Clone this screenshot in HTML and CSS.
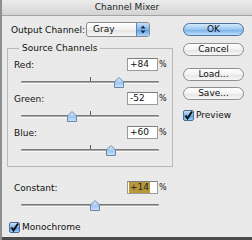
FILE: index.html
```html
<!DOCTYPE html>
<html>
<head>
<meta charset="utf-8">
<link rel="stylesheet" href="styles.css">
</head>
<body>
<div class="win">
  <div class="titlebar">Channel Mixer</div>
  <div class="body">
    <div class="left">
      <div class="outrow">
        <span class="outlabel">Output Channel:</span>
        <div class="popup">
          <span class="popup-text">Gray</span>
          <span class="arrows">
            <svg width="12" height="13" viewBox="0 0 12 13"><path d="M6 2.5 L8.5 5.5 L3.5 5.5 Z M6 10.5 L8.5 7.5 L3.5 7.5 Z" fill="#1b2846"/></svg>
          </span>
        </div>
      </div>
      <fieldset class="group">
        <legend>Source Channels</legend>
        <div class="chan">
          <div class="head"><span class="lbl">Red:</span><span class="field">+84</span><span class="pct">%</span></div>
          <div class="slider"><div class="track"></div><div class="tick"></div><div class="thumb" style="left:71%"><svg width="10" height="11" viewBox="0 0 10 11"><defs><linearGradient id="g1" x1="0" y1="0" x2="0" y2="1"><stop offset="0" stop-color="#e4f1ff"/><stop offset="0.55" stop-color="#9cc6f0"/><stop offset="1" stop-color="#cfe6fb"/></linearGradient></defs><path d="M5 0.5 L9.5 5 L9.5 10.5 L0.5 10.5 L0.5 5 Z" fill="url(#g1)" stroke="#6d86a8"/></svg></div></div>
        </div>
        <div class="chan">
          <div class="head"><span class="lbl">Green:</span><span class="field">-52</span><span class="pct">%</span></div>
          <div class="slider"><div class="track"></div><div class="tick"></div><div class="thumb" style="left:37%"><svg width="10" height="11" viewBox="0 0 10 11"><path d="M5 0.5 L9.5 5 L9.5 10.5 L0.5 10.5 L0.5 5 Z" fill="url(#g1)" stroke="#6d86a8"/></svg></div></div>
        </div>
        <div class="chan">
          <div class="head"><span class="lbl">Blue:</span><span class="field">+60</span><span class="pct">%</span></div>
          <div class="slider"><div class="track"></div><div class="tick"></div><div class="thumb" style="left:65%"><svg width="10" height="11" viewBox="0 0 10 11"><path d="M5 0.5 L9.5 5 L9.5 10.5 L0.5 10.5 L0.5 5 Z" fill="url(#g1)" stroke="#6d86a8"/></svg></div></div>
        </div>
      </fieldset>
      <div class="const">
        <div class="head"><span class="lbl">Constant:</span><span class="field"><span class="sel">+14</span></span><span class="pct">%</span></div>
        <div class="slider"><div class="track"></div><div class="thumb" style="left:53.5%"><svg width="10" height="11" viewBox="0 0 10 11"><path d="M5 0.5 L9.5 5 L9.5 10.5 L0.5 10.5 L0.5 5 Z" fill="url(#g1)" stroke="#6d86a8"/></svg></div></div>
      </div>
      <div class="check mono">
        <span class="box"><svg width="11" height="11" viewBox="0 0 11 11"><path d="M2.5 5.5 L4.5 8.5 L9 1.5" fill="none" stroke="#111" stroke-width="2"/></svg></span>
        <span>Monochrome</span>
      </div>
    </div>
    <div class="right">
      <div class="btn ok">OK</div>
      <div class="btn cancel">Cancel</div>
      <div class="btn load">Load...</div>
      <div class="btn save">Save...</div>
      <div class="check preview">
        <span class="box"><svg width="11" height="11" viewBox="0 0 11 11"><path d="M2.5 5.5 L4.5 8.5 L9 1.5" fill="none" stroke="#111" stroke-width="2"/></svg></span>
        <span>Preview</span>
      </div>
    </div>
  </div>
  <div class="bottom"></div>
</div>
</body>
</html>
```

FILE: styles.css
```css
* { box-sizing: border-box; }
html, body { margin: 0; padding: 0; }
body {
  width: 252px;
  height: 240px;
  overflow: hidden;
  font-family: "DejaVu Sans", sans-serif;
  font-size: 9px;
  color: #111;
  background: #e9e9e9;
}
.win {
  width: 252px;
  height: 240px;
  display: flex;
  flex-direction: column;
  border-left: 2px solid #8f8f8f;
  background: repeating-linear-gradient(#ececec 0 1px, #e7e7e7 1px 2px);
}
.titlebar {
  height: 16px;
  flex: none;
  text-align: center;
  line-height: 15px;
  border-bottom: 1px solid #a3a3a3;
  background: linear-gradient(#ececec, #d3d3d3);
  color: #222;
}
.body {
  flex: 1;
  min-height: 0;
  display: flex;
}
.left {
  width: 171px;
  flex: none;
  padding: 6px 0 0 5px;
}
.outrow {
  display: flex;
  align-items: center;
  height: 15px;
  padding-left: 4px;
}
.outlabel {
  width: 75px;
  flex: none;
}
.popup {
  width: 64px;
  height: 15px;
  display: flex;
  border: 1px solid #8c8c8c;
  border-radius: 3px;
  background: linear-gradient(#ffffff, #f0f0f0 50%, #e2e2e2 51%, #f7f7f7);
  overflow: hidden;
}
.popup-text {
  flex: 1;
  padding-left: 6px;
  line-height: 13px;
}
.arrows {
  width: 13px;
  flex: none;
  border-left: 1px solid #6183b5;
  background: linear-gradient(#c4e0fa, #7eb4ea 50%, #5c9ee2 51%, #a8d4f8);
}
.arrows svg { display: block; }
.group {
  margin: 5px 0 0 0;
  width: 166px;
  padding: 0 6px 6px;
  border: 1px solid #b9b9b9;
  min-width: 0;
}
.group legend {
  padding: 0 3px;
  margin-left: 5px;
  line-height: 12px;
}
.head {
  display: flex;
  align-items: center;
  height: 13px;
}
.chan:first-of-type .head { margin-top: 4px; }
.lbl { flex: none; }
.field {
  margin-left: auto;
  width: 31px;
  height: 13px;
  border: 1px solid #9a9a9a;
  border-top-color: #7d7d7d;
  background: #fff;
  padding-left: 2px;
  line-height: 11px;
  display: flex;
  align-items: center;
}
.sel {
  background: #b8993a;
  height: 11px;
  padding: 0 1px;
  margin-left: -1px;
  color: #222;
}
.pct {
  width: 7px;
  margin-left: 1px;
  text-align: right;
  font-size: 8px;
}
.slider {
  position: relative;
  height: 21px;
  margin: 0 7px;
  padding-top: 10px;
}
.track {
  height: 3px;
  border-radius: 1px;
  background: linear-gradient(#7a7a7a 0 1px, #a9a9a9 1px 2px, #f7f7f7 2px 3px);
}
.tick {
  position: absolute;
  left: 50%;
  top: 6px;
  width: 1px;
  height: 4px;
  background: #5e5e5e;
}
.thumb {
  position: absolute;
  top: 6px;
  width: 10px;
  height: 11px;
  margin-left: -5px;
}
.thumb svg { display: block; }
.const {
  margin-top: 14px;
  padding: 0 7px;
  width: 166px;
}
.check {
  display: flex;
  align-items: center;
  height: 12px;
}
.mono { margin-top: 6px; padding-left: 2px; }
.box {
  width: 11px;
  height: 11px;
  flex: none;
  border: 1px solid #4d6c98;
  border-radius: 2px;
  background: linear-gradient(#c9e3fb, #79b0ea 50%, #4f94dc 51%, #9fd0fa);
  margin-right: 2px;
}
.box svg { display: block; margin: -1px 0 0 -1px; }
.right {
  width: 61px;
  margin-left: 10px;
  padding-top: 7px;
  display: flex;
  flex-direction: column;
}
.btn {
  height: 13px;
  flex: none;
  border: 1px solid #8e8e8e;
  border-radius: 7px;
  text-align: center;
  line-height: 11px;
  background: linear-gradient(#ffffff, #f2f2f2 50%, #e3e3e3 51%, #f8f8f8);
}
.ok {
  border-color: #4c6f9f;
  background: linear-gradient(#d4e9fc, #98c6f1 50%, #71abe7 51%, #bfe1fc);
}
.cancel { margin-top: 7px; }
.load { margin-top: 12px; }
.save { margin-top: 6px; }
.preview { margin-top: 9px; }
.bottom {
  height: 3px;
  flex: none;
  background: #4c4c4c;
}
```
